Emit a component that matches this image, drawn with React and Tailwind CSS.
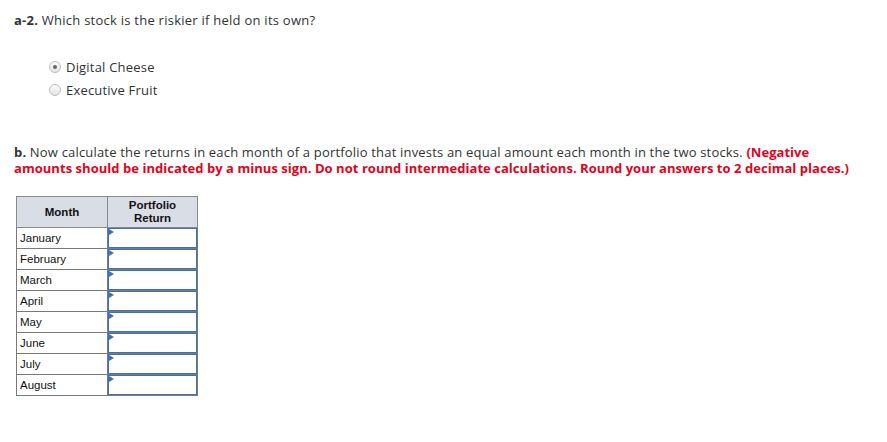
import React from "react";

const months = ["January","February","March","April","May","June","July","August"];

function Radio({ checked }) {
  return (
    <span className="relative inline-block w-[12px] h-[12px] rounded-full border border-[#bdbdbd] bg-gradient-to-b from-[#fdfdfd] to-[#e2e2e2]">
      {checked && <span className="absolute left-[3px] top-[3px] w-[4px] h-[4px] rounded-full bg-[#666]" />}
    </span>
  );
}

export default function App() {
  return (
    <div className="w-[887px] h-[442px] bg-white text-[#333] pl-[14px] pt-[11px]" style={{ fontFamily: "'Open Sans', Lato, sans-serif" }}>
      <p className="text-[13px] leading-[18px] tracking-[0.25px]"><b className="font-bold">a-2.</b> Which stock is the riskier if held on its own?</p>
      <div className="mt-[29px] ml-[35px] flex flex-col gap-[5px] text-[13px] leading-[18px] tracking-[0.2px]">
        <label className="flex items-center gap-[5px]"><Radio checked /> Digital Cheese</label>
        <label className="flex items-center gap-[5px]"><Radio /> Executive Fruit</label>
      </div>
      <p className="mt-[45px] text-[13px] leading-[16px] tracking-[0.18px] whitespace-nowrap">
        <b className="font-bold">b.</b> Now calculate the returns in each month of a portfolio that invests an equal amount each month in the two stocks.{" "}
        <span className="font-bold text-[#e8001c] tracking-[0.04px]">(Negative<br />amounts should be indicated by a minus sign. Do not round intermediate calculations. Round your answers to 2 decimal places.)</span>
      </p>
      <table className="mt-[20px] ml-[2px] border-collapse text-[11.5px] text-[#111]" style={{ fontFamily: "Arial, 'Liberation Sans', sans-serif" }}>
        <thead>
          <tr className="bg-[#d9dde5]">
            <th className="w-[91px] h-[31px] border border-[#8a8a8a] font-bold leading-[13px]">Month</th>
            <th className="w-[90px] h-[31px] border border-[#8a8a8a] font-bold leading-[13px]">Portfolio<br />Return</th>
          </tr>
        </thead>
        <tbody>
          {months.map((m) => (
            <tr key={m}>
              <td className="h-[21px] border border-[#7a7a7a] px-[3px] leading-[12px]">{m}</td>
              <td className="h-[21px] border border-[#7a7a7a] p-0">
                <div className="relative h-[20px] border border-[#3c73b4]">
                  <span className="absolute left-0 top-0 w-0 h-0 border-t-[3px] border-b-[3px] border-l-[5px] border-t-transparent border-b-transparent border-l-[#3c73b4]" />
                </div>
              </td>
            </tr>
          ))}
        </tbody>
      </table>
    </div>
  );
}
